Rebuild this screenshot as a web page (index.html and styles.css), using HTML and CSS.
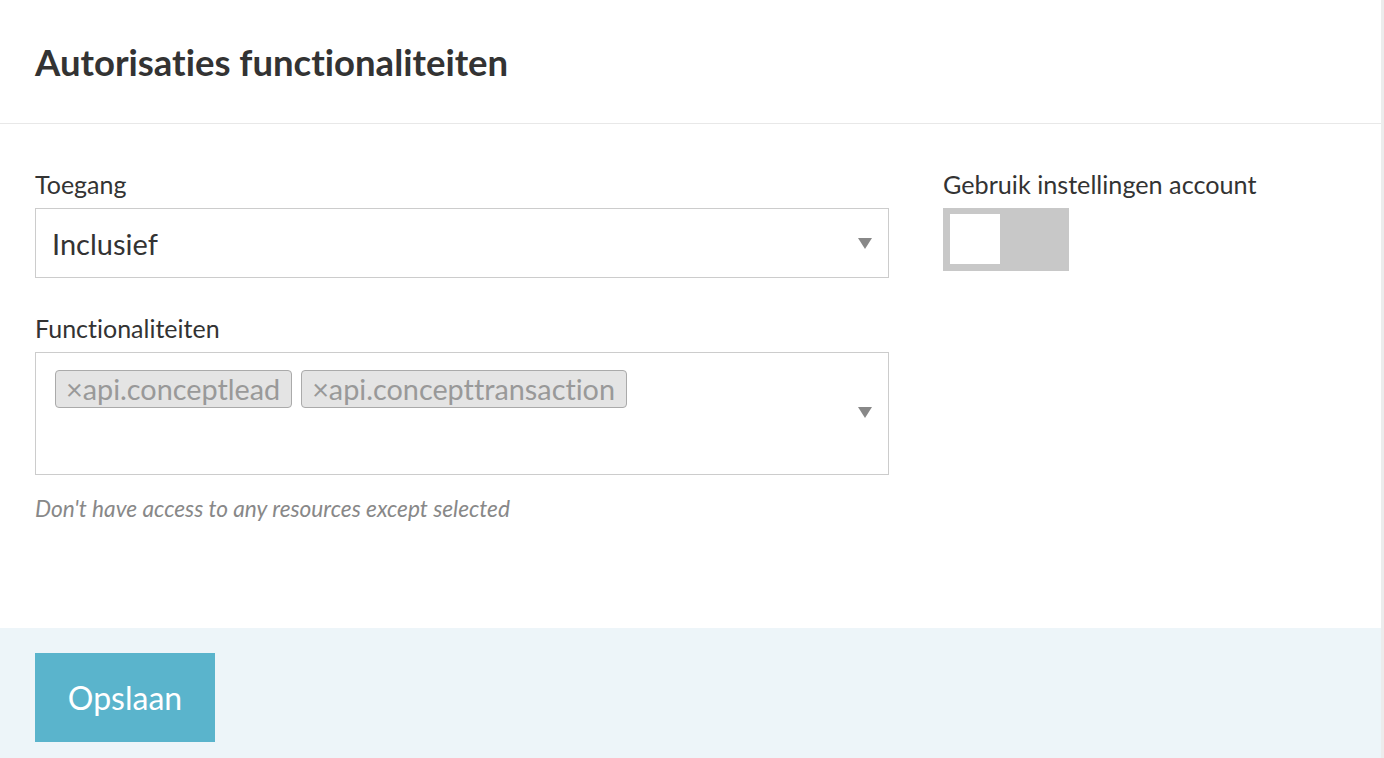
FILE: index.html
```html
<!DOCTYPE html>
<html lang="nl">
<head>
<meta charset="utf-8">
<title>Autorisaties functionaliteiten</title>
<link rel="stylesheet" href="styles.css">
</head>
<body>
<div class="panel">
  <header class="panel-header">
    <h1 class="title">Autorisaties functionaliteiten</h1>
  </header>
  <main class="panel-body">
    <div class="form-grid">
      <div class="col-main">
        <div class="field">
          <label class="label">Toegang</label>
          <div class="select">
            <span class="select-value">Inclusief</span>
            <span class="caret"></span>
          </div>
        </div>
        <div class="field">
          <label class="label">Functionaliteiten</label>
          <div class="multiselect">
            <div class="tags">
              <span class="tag">×api.conceptlead</span>
              <span class="tag">×api.concepttransaction</span>
            </div>
            <span class="caret caret-multi"></span>
          </div>
          <p class="help">Don't have access to any resources except selected</p>
        </div>
      </div>
      <div class="col-side">
        <label class="label label-side">Gebruik instellingen account</label>
        <div class="toggle"><span class="knob"></span></div>
      </div>
    </div>
  </main>
  <footer class="panel-footer">
    <button class="btn-save" type="button">Opslaan</button>
  </footer>
</div>
</body>
</html>
```

FILE: styles.css
```css
* { box-sizing: border-box; }
html, body {
  margin: 0;
  padding: 0;
  background: #ffffff;
  font-family: Lato, "Open Sans", "Liberation Sans", sans-serif;
  font-variant-ligatures: no-common-ligatures;
  color: #333333;
}
.panel {
  width: 1384px;
  height: 758px;
  display: flex;
  flex-direction: column;
  border-right: 3px solid #ececec;
}
.panel-header {
  height: 124px;
  padding: 0 35px;
  display: flex;
  align-items: center;
  border-bottom: 1px solid #e8e8e8;
}
.title {
  margin: 0;
  font-size: 36.5px;
  font-weight: 700;
  color: #333333;
}
.panel-body {
  flex: 1;
  padding: 45px 35px 0;
}
.form-grid {
  display: grid;
  grid-template-columns: 854px 1fr;
  column-gap: 54px;
}
.field {
  display: flex;
  flex-direction: column;
}
.field + .field { margin-top: 35px; }
.label {
  display: block;
  font-size: 25px;
  line-height: 31px;
  margin-bottom: 8px;
  color: #333333;
}
.label-side { font-size: 25.2px; }
.select {
  height: 70px;
  border: 1px solid #cccccc;
  display: flex;
  align-items: center;
  justify-content: space-between;
  padding: 0 16px 0 16px;
}
.select-value {
  font-size: 29px;
  color: #333333;
}
.caret {
  width: 0;
  height: 0;
  border-left: 7px solid transparent;
  border-right: 7px solid transparent;
  border-top: 11px solid #888888;
}
.multiselect {
  height: 123px;
  border: 1px solid #cccccc;
  display: flex;
  align-items: flex-start;
  justify-content: space-between;
  padding: 17px 16px 0 19px;
}
.caret-multi { margin-top: 37px; }
.tags {
  display: flex;
  gap: 9px;
}
.tag {
  height: 38px;
  line-height: 36px;
  padding: 0 11px 0 10px;
  background: #e4e4e4;
  border: 1px solid #aaaaaa;
  border-radius: 4px;
  font-size: 28.8px;
  color: #999999;
}
.help {
  margin: 21px 0 0;
  font-size: 22.7px;
  line-height: 26px;
  font-style: italic;
  color: #888888;
}
.col-side {
  display: flex;
  flex-direction: column;
}
.toggle {
  width: 126px;
  height: 63px;
  background: #c8c8c8;
  padding: 6px 7px;
}
.knob {
  display: block;
  width: 50px;
  height: 50px;
  background: #ffffff;
}
.panel-footer {
  height: 130px;
  background: #edf5f9;
  padding: 25px 35px;
}
.btn-save {
  width: 180px;
  height: 89px;
  border: 0;
  background: #5ab4cc;
  color: #ffffff;
  font-family: Lato, "Open Sans", "Liberation Sans", sans-serif;
  font-size: 32px;
  padding: 0;
  cursor: pointer;
}
```
